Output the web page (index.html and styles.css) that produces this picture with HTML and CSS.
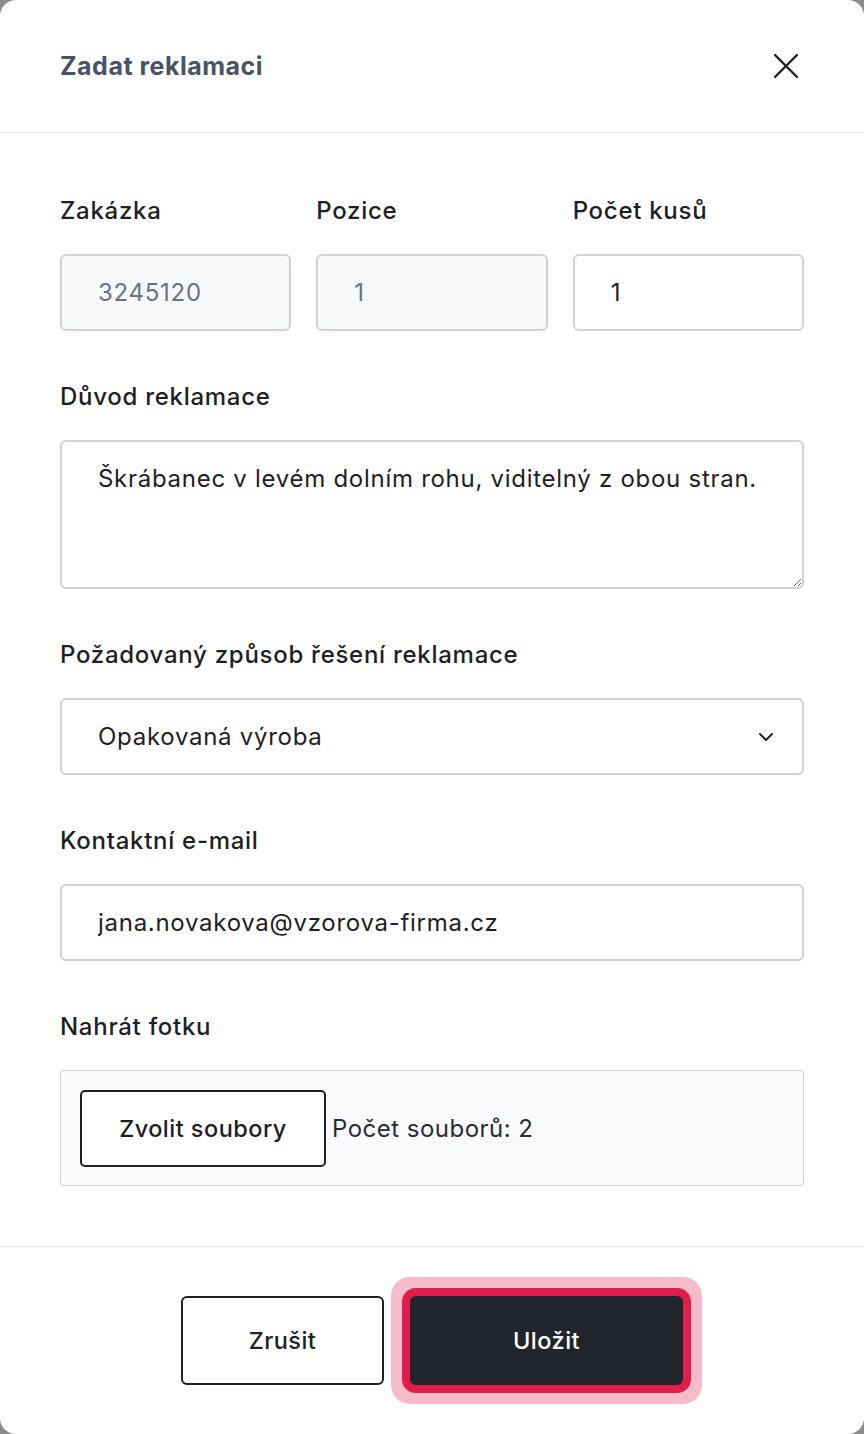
FILE: index.html
```html
<!DOCTYPE html>
<html lang="cs">
<head>
    <meta charset="UTF-8">
    <meta name="viewport" content="width=device-width, initial-scale=1.0">
    <title>Zadat reklamaci</title>
    <link rel="stylesheet" href="styles.css">
</head>
<body>
    <div class="modal">
        <div class="modal-header">
            <h2 class="modal-title">Zadat reklamaci</h2>
            <button class="close-button" type="button" aria-label="Zavřít">
                <svg width="24" height="24" viewBox="0 0 24 24" fill="none" stroke="#1f2024" stroke-width="2.4" stroke-linecap="round">
                    <path d="M1 1 L23 23 M23 1 L1 23"/>
                </svg>
            </button>
        </div>
        <form class="modal-body" id="claim-form">
            <div class="row">
                <div class="field">
                    <label for="order">Zakázka</label>
                    <input type="text" id="order" value="3245120" disabled>
                </div>
                <div class="field">
                    <label for="position">Pozice</label>
                    <input type="text" id="position" value="1" disabled>
                </div>
                <div class="field">
                    <label for="count">Počet kusů</label>
                    <input type="text" id="count" value="1">
                </div>
            </div>
            <div class="field">
                <label for="reason">Důvod reklamace</label>
                <textarea id="reason">Škrábanec v levém dolním rohu, viditelný z obou stran.</textarea>
            </div>
            <div class="field">
                <label for="solution">Požadovaný způsob řešení reklamace</label>
                <div class="select-wrap">
                    <select id="solution">
                        <option>Opakovaná výroba</option>
                        <option>Sleva</option>
                        <option>Vrácení peněz</option>
                    </select>
                    <svg class="chevron" width="16" height="10" viewBox="0 0 16 10" fill="none" stroke="#1f2024" stroke-width="2" stroke-linecap="round" stroke-linejoin="round">
                        <path d="M2 2 L8 8 L14 2"/>
                    </svg>
                </div>
            </div>
            <div class="field">
                <label for="email">Kontaktní e-mail</label>
                <input type="email" id="email" value="jana.novakova@vzorova-firma.cz">
            </div>
            <div class="field">
                <label>Nahrát fotku</label>
                <div class="file-box">
                    <button type="button" class="file-button">Zvolit soubory</button>
                    <span class="file-count">Počet souborů: 2</span>
                </div>
            </div>
        </form>
        <div class="modal-footer">
            <button type="button" class="btn btn-cancel">Zrušit</button>
            <button type="submit" form="claim-form" class="btn btn-save">Uložit</button>
        </div>
    </div>
</body>
</html>
```

FILE: styles.css
```css
* {
    box-sizing: border-box;
}

body {
    margin: 0;
    background-color: #8c8c8c;
    font-family: Inter, 'Noto Sans', sans-serif;
    color: #1f2024;
}

.modal {
    background: white;
    border-radius: 16px;
    min-height: 100vh;
    display: flex;
    flex-direction: column;
}

.modal-header {
    height: 133px;
    padding: 0 60px;
    display: flex;
    justify-content: space-between;
    align-items: center;
    border-bottom: 1px solid #e6e7eb;
}

.modal-title {
    margin: 0;
    font-size: 25px;
    font-weight: 700;
    color: #4b5263;
    letter-spacing: 0.02em;
}

.close-button {
    background: none;
    border: none;
    padding: 6px;
    cursor: pointer;
    display: flex;
}

.modal-body {
    padding: 61px 60px 60px;
    display: flex;
    flex-direction: column;
    gap: 49px;
}

.row {
    display: grid;
    grid-template-columns: repeat(3, 1fr);
    gap: 25px;
}

.field {
    display: flex;
    flex-direction: column;
    gap: 27px;
}

label {
    font-size: 24px;
    line-height: 33px;
    font-weight: 500;
    letter-spacing: 0.03em;
}

input,
textarea,
select {
    width: 100%;
    height: 77px;
    padding: 0 36px;
    border: 2px solid #cdd1da;
    border-radius: 6px;
    background: white;
    font-family: inherit;
    font-size: 24px;
    letter-spacing: 0.03em;
    color: #1f2024;
}

input:disabled {
    background: #f7f8fa;
    color: #6b7280;
}

textarea {
    height: 149px;
    padding: 20px 36px;
    line-height: 33px;
    resize: vertical;
}

.select-wrap {
    position: relative;
}

select {
    appearance: none;
    cursor: pointer;
}

.chevron {
    position: absolute;
    right: 30px;
    top: 34px;
    pointer-events: none;
}

.file-box {
    height: 116px;
    padding: 0 19px;
    display: flex;
    align-items: center;
    gap: 6px;
    background: #f9fafb;
    border: 1px solid #d1d5db;
    border-radius: 4px;
}

.file-button {
    width: 246px;
    height: 77px;
    background: white;
    border: 2px solid #1f2024;
    border-radius: 5px;
    font-family: inherit;
    font-size: 23.5px;
    font-weight: 500;
    letter-spacing: 0.02em;
    color: #1f2024;
    cursor: pointer;
}

.file-count {
    font-size: 24px;
    letter-spacing: 0.02em;
    color: #2a2c32;
}

.modal-footer {
    flex: 1;
    border-top: 1px solid #e6e7eb;
    display: flex;
    justify-content: center;
    align-items: center;
    gap: 26px;
}

.btn {
    height: 89px;
    border-radius: 6px;
    font-family: inherit;
    font-size: 23.5px;
    font-weight: 500;
    letter-spacing: 0.02em;
    cursor: pointer;
}

.btn-cancel {
    width: 203px;
    background: white;
    border: 2px solid #1f2024;
    color: #1f2024;
}

.btn-save {
    width: 273px;
    background: #23252d;
    border: none;
    color: white;
    box-shadow: 0 0 0 8px #e01e4b, 0 0 0 19px rgba(224, 30, 75, 0.3);
}
```
